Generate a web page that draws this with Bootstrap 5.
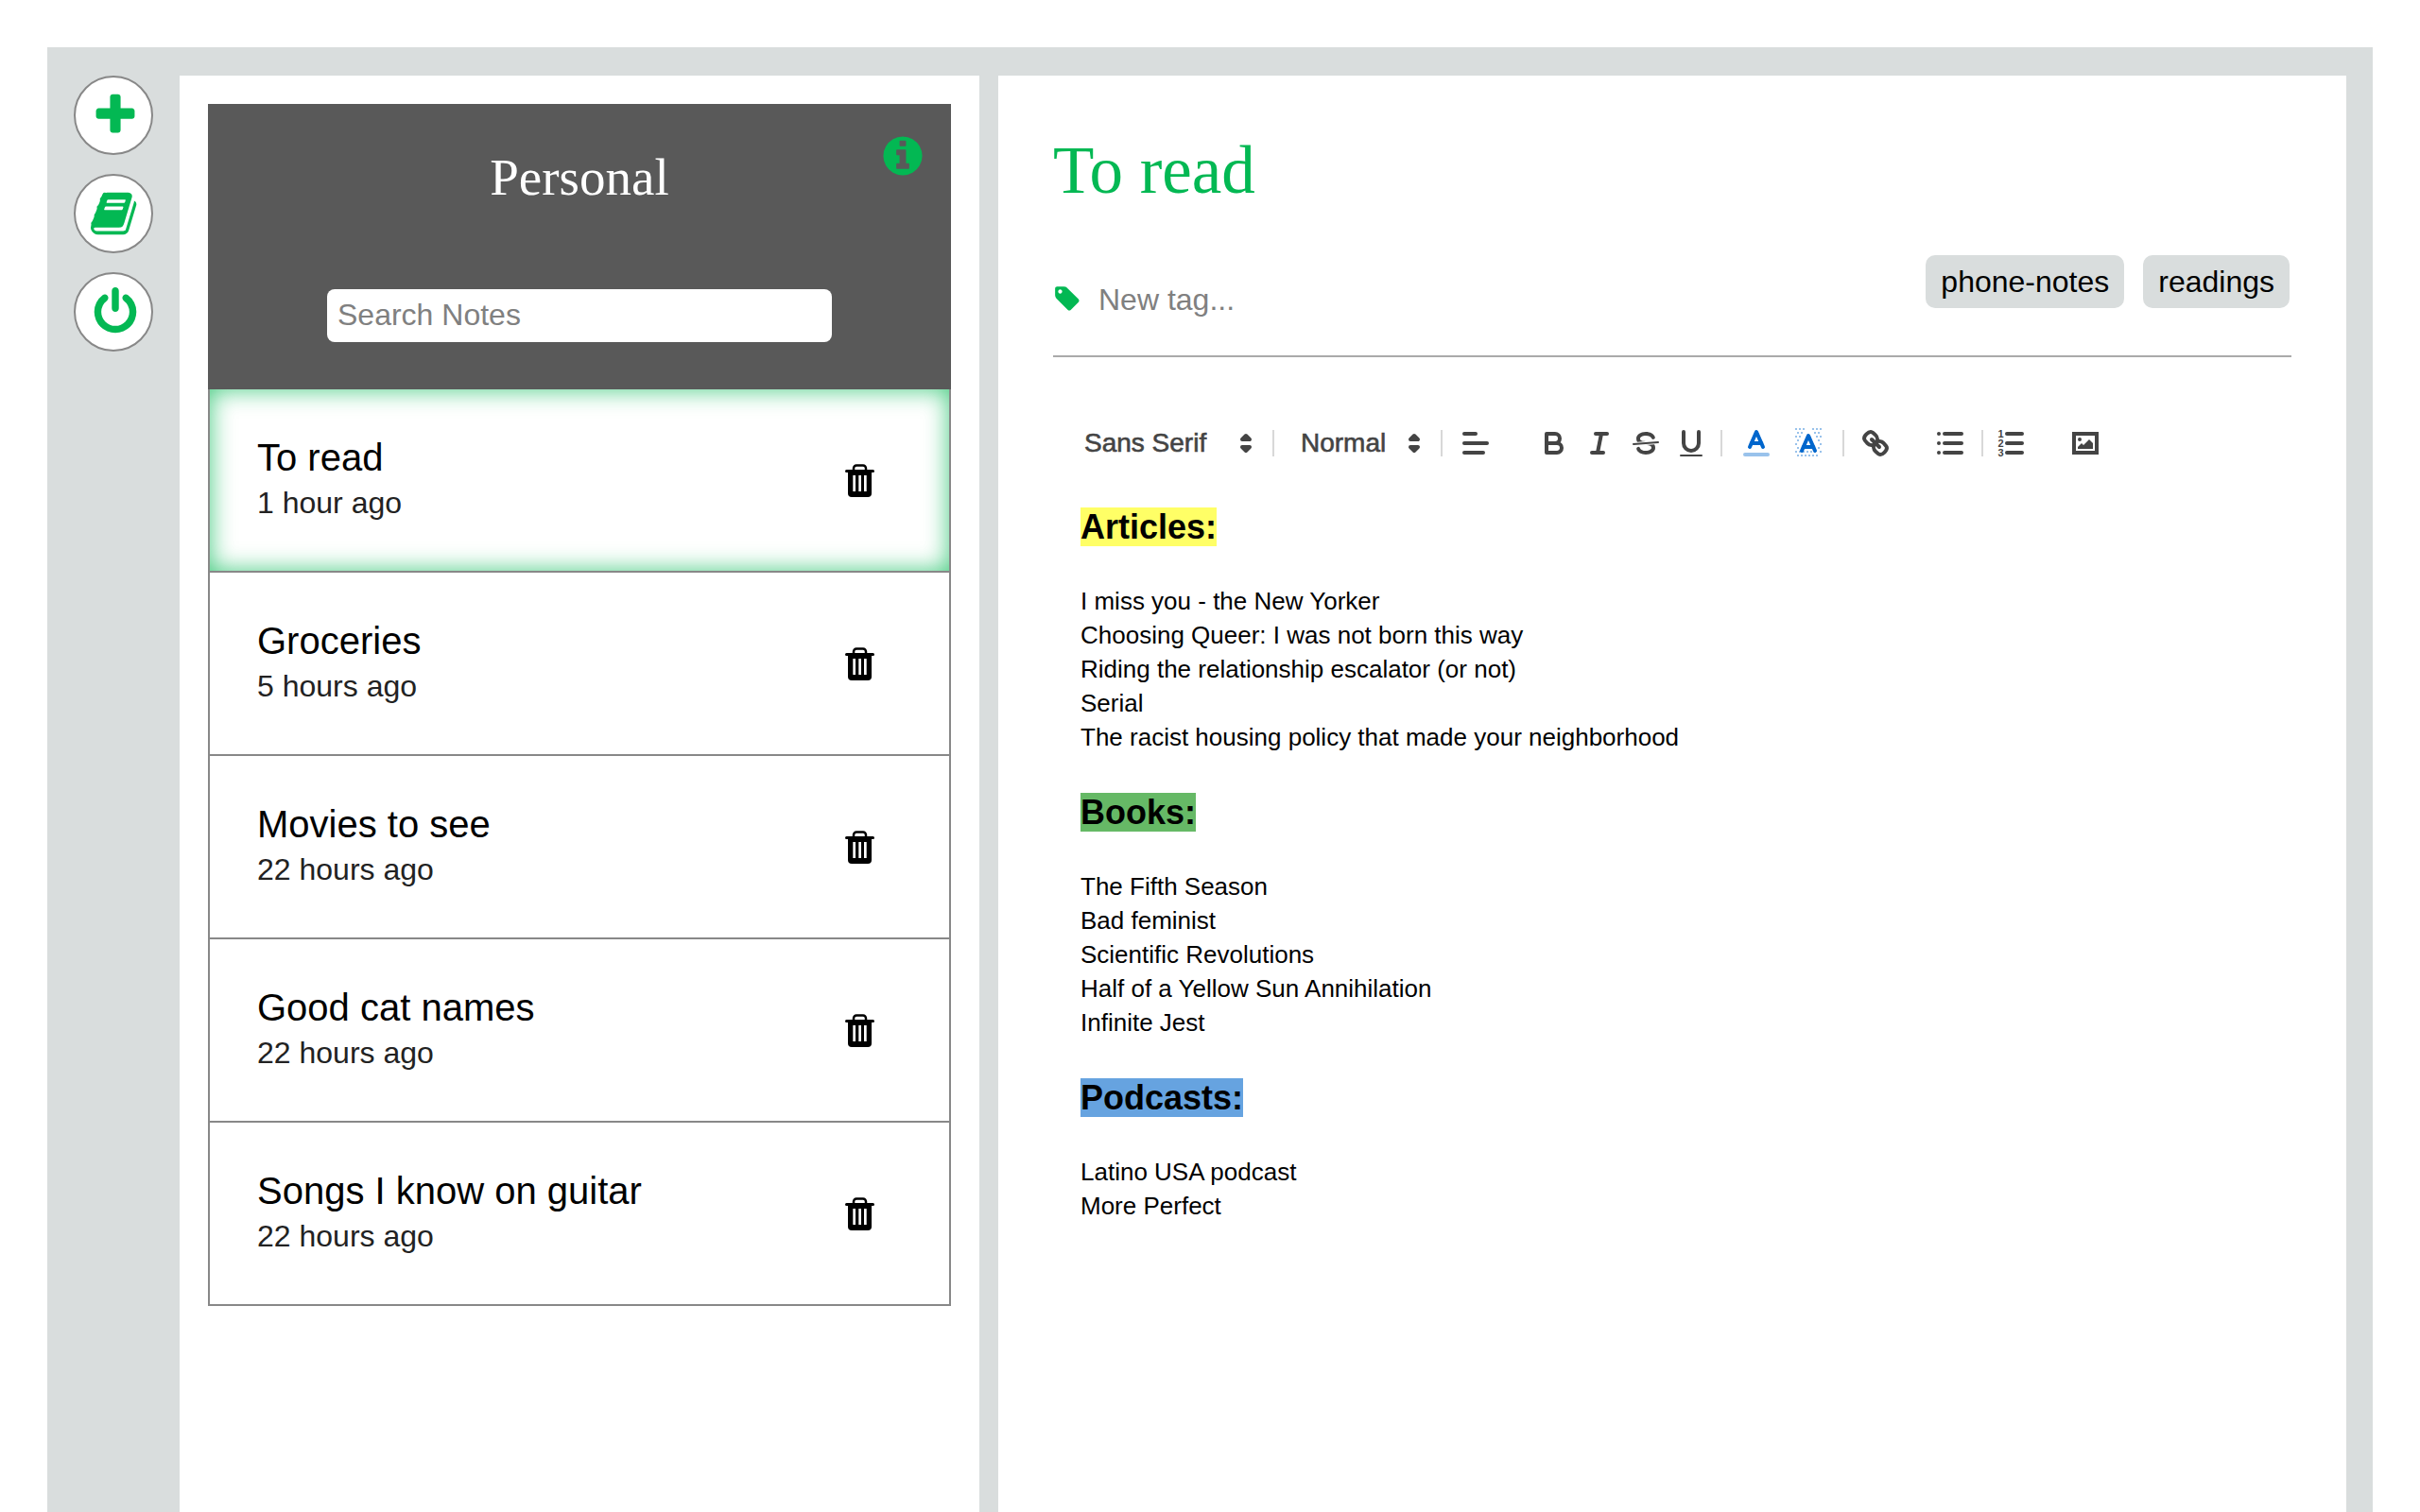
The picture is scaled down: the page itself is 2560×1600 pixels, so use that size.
<!DOCTYPE html>
<html lang="en"><head><meta charset="utf-8"><title>Notes</title>
<link rel="stylesheet" href="https://cdn.jsdelivr.net/npm/bootstrap@5.3.0/dist/css/bootstrap.min.css">
<style>
:root{--grn:#03b853;--bgy:#d9dddd;}
html,body{height:1600px;overflow:hidden;}
body{font-family:"Liberation Sans",Arial,sans-serif;background:#fff;color:#000;padding:50px 50px 0;}
.shell{background:var(--bgy);height:1550px;padding-top:30px;}
.rail{width:140px;flex:none;padding-left:28px;gap:20px;}
.roundbtn{width:84px;height:84px;border:2px solid #888;border-radius:50%;background:#fff;padding:0;}
.roundbtn svg{fill:var(--grn);margin-left:4px;}
.listpanel{width:846px;flex:none;background:#fff;padding:30px;margin-right:20px;}
.editorpanel{width:1426px;flex:none;background:#fff;margin-right:28px;}
.listhead{background:#595959;height:302px;position:relative;}
.nbname{font-family:"Liberation Serif",serif;font-size:55px;line-height:60px;color:#fff;font-weight:400;text-align:center;margin:0;padding-top:48px;}
.infoicon{position:absolute;left:711px;top:31px;fill:var(--grn);}
.searchbox{display:block;width:534px;height:56px;margin:88px auto 0;border:0;border-radius:8px;padding:0 11px 2px;font-size:32px;background:#fff;}
.searchbox::placeholder,.tagbox::placeholder{color:#808080;opacity:1;}
.noterow{height:194px;border:2px solid #888;border-top:0;padding:0 30px 0 50px;background:#fff;}
.noterow.current{box-shadow:inset 0 0 26px rgba(3,184,83,.75);border-top:0;}
.notetitle{font-size:40px;line-height:46px;margin:-4px 0 0;}
.notetime{font-size:32px;line-height:38px;color:#222;margin-top:6px;}
.binicon{width:31px;height:35px;margin-right:49px;}
.edhead{margin:0 58px;height:298px;border-bottom:2px solid #aaa;}
.edtitle{font-family:"Liberation Serif",serif;font-size:71px;line-height:80px;color:var(--grn);font-weight:400;margin:0;padding-top:60px;}
.tagzone{margin-top:50px;}
.tagbox{border:0;font-size:32px;color:#333;width:300px;margin-left:18px;padding:0;outline:0;margin-top:27px;line-height:40px;height:40px;}
.tagicon{width:30px;height:30px;fill:var(--grn);margin-top:31px;}
.chipset{gap:20px;margin-right:2px;}
.chip{background:var(--bgy);border-radius:10px;font-size:32px;line-height:56px;height:56px;padding:0 16px;}
.tbar{height:72px;margin:55px 0 0 91px;color:#444;}
.pickname{font-size:28px;color:#444;-webkit-text-stroke:.6px #444;line-height:36px;}
.pick svg,.tbtn svg{width:36px;height:36px;display:block;}
.pick .arrowset{stroke:#444;stroke-width:2;stroke-linejoin:round;fill:#444;}
.arrow-a{margin-right:10px;}
.arrow-b{margin-right:10px;}
.tbtn{width:48.5px;height:36px;flex:none;display:flex;justify-content:center;}
.tsep{width:2px;height:28px;background:#d8d8d8;flex:none;}
svg .s{fill:none;stroke:#444;stroke-width:2;stroke-linecap:round;stroke-linejoin:round;}
svg .t{fill:none;stroke:#444;stroke-width:1;stroke-linecap:round;}
svg .f{fill:#444;}
.notebody{padding:0 0 0 87px;font-size:26px;line-height:36px;margin-top:27px;}
.notebody h2{font-size:36px;line-height:52px;font-weight:700;margin:36px 0 34px;}
.notebody h2:first-child{margin-top:0;}
.hl-y{background:#ffff66;}.hl-g{background:#66b966;}.hl-b{background:#66a3e0;}
</style></head>
<body>
<div class="shell d-flex">
 <div class="rail d-flex flex-column">
  <button class="roundbtn d-flex align-items-center justify-content-center" aria-label="New note"><svg width="52" height="52" viewBox="0 0 1792 1792"><path d="M1600 736v192q0 40-28 68t-68 28h-416v416q0 40-28 68t-68 28h-192q-40 0-68-28t-28-68v-416h-416q-40 0-68-28t-28-68v-192q0-40 28-68t68-28h416v-416q0-40 28-68t68-28h192q40 0 68 28t28 68v416h416q40 0 68 28t28 68z"/></svg></button>
  <button class="roundbtn d-flex align-items-center justify-content-center" aria-label="Notebooks"><svg width="52" height="52" viewBox="0 0 1792 1792"><path d="M1639 478q40 57 18 129l-275 906q-19 64-76.500 107.500t-122.500 43.500h-923q-77 0-148.500-53.500t-99.500-131.500q-24-67-2-127 0-4 3-27t4-37q1-8-3-21.500t-3-19.500q2-11 8-21t16.500-23.500 16.500-23.500q23-38 45-91.500t30-91.500q3-10 .5-30t-.5-28q3-11 17-28t17-23q21-36 42-92t25-90q1-9-2.500-32t.5-28q4-13 22-30.500t22-22.500q19-26 42.500-84.500t27.500-96.500q1-8-3-25.500t-2-26.500q2-8 9-18t18-23 17-21q8-12 16.500-30.500t15-35 16-36 19.500-32 26.500-23.500 36-11.500 47.500 5.500l-1 3q38-9 51-9h761q74 0 114 56t18 130l-274 906q-36 119-71.500 153.500t-128.500 34.500h-869q-27 0-38 15-11 16-1 43 24 70 144 70h923q29 0 56-15.500t35-41.500l300-987q7-22 5-57 38 15 59 43zm-1064 2q-4 13 2 22.500t20 9.500h608q13 0 25.500-9.500t16.500-22.500l21-64q4-13-2-22.500t-20-9.500h-608q-13 0-25.500 9.500t-16.500 22.500zm-83 256q-4 13 2 22.500t20 9.500h608q13 0 25.500-9.500t16.500-22.500l21-64q4-13-2-22.500t-20-9.500h-608q-13 0-25.500 9.500t-16.500 22.500z"/></svg></button>
  <button class="roundbtn d-flex align-items-center justify-content-center" aria-label="Log out"><svg width="52" height="52" viewBox="0 0 1792 1792"><path d="M1664 896q0 156-61 298t-164 245-245 164-298 61-298-61-245-164-164-245-61-298q0-182 80.500-343t226.500-270q43-32 95.500-25t83.500 50q32 42 24.500 94.500t-49.500 84.500q-98 74-151.500 181t-53.500 228q0 104 40.500 198.500t109.500 163.500 163.500 109.500 198.500 40.500 198.500-40.500 163.500-109.500 109.500-163.500 40.500-198.500q0-121-53.500-228t-151.500-181q-42-32-49.500-84.500t24.500-94.500q31-43 84-50t95 25q146 109 226.500 270t80.500 343zm-640-768v640q0 52-38 90t-90 38-90-38-38-90v-640q0-52 38-90t90-38 90 38 38 90z"/></svg></button>
 </div>
 <div class="listpanel">
  <div class="listhead">
   <h1 class="nbname">Personal</h1>
   <svg class="infoicon" width="48" height="48" viewBox="0 0 1792 1792"><path d="M1152 1376v-160q0-14-9-23t-23-9h-96v-512q0-14-9-23t-23-9h-320q-14 0-23 9t-9 23v160q0 14 9 23t23 9h96v320h-96q-14 0-23 9t-9 23v160q0 14 9 23t23 9h448q14 0 23-9t9-23zm-128-896v-160q0-14-9-23t-23-9h-192q-14 0-23 9t-9 23v160q0 14 9 23t23 9h192q14 0 23-9t9-23zm640 416q0 209-103 385.500t-279.500 279.500-385.500 103-385.500-103-279.500-279.500-103-385.500 103-385.500 279.500-279.500 385.500-103 385.500 103 279.500 279.500 103 385.500z"/></svg>
   <input class="searchbox" placeholder="Search Notes" aria-label="Search Notes">
  </div>
  <div class="noterow current d-flex align-items-center justify-content-between"><div><p class="notetitle">To read</p><div class="notetime">1 hour ago</div></div><svg class="binicon" viewBox="0 0 31 35"><use href="#bin"/></svg></div>
  <div class="noterow d-flex align-items-center justify-content-between"><div><p class="notetitle">Groceries</p><div class="notetime">5 hours ago</div></div><svg class="binicon" viewBox="0 0 31 35"><use href="#bin"/></svg></div>
  <div class="noterow d-flex align-items-center justify-content-between"><div><p class="notetitle">Movies to see</p><div class="notetime">22 hours ago</div></div><svg class="binicon" viewBox="0 0 31 35"><use href="#bin"/></svg></div>
  <div class="noterow d-flex align-items-center justify-content-between"><div><p class="notetitle">Good cat names</p><div class="notetime">22 hours ago</div></div><svg class="binicon" viewBox="0 0 31 35"><use href="#bin"/></svg></div>
  <div class="noterow d-flex align-items-center justify-content-between"><div><p class="notetitle">Songs I know on guitar</p><div class="notetime">22 hours ago</div></div><svg class="binicon" viewBox="0 0 31 35"><use href="#bin"/></svg></div>
 </div>
 <div class="editorpanel">
  <div class="edhead">
   <h2 class="edtitle">To read</h2>
   <div class="tagzone d-flex justify-content-between align-items-start">
    <div class="d-flex align-items-start"><svg class="tagicon" viewBox="0 0 1792 1792"><path d="M576 448q0-53-37.500-90.500t-90.500-37.500-90.500 37.500-37.500 90.500 37.500 90.500 90.500 37.500 90.500-37.500 37.500-90.500zm1067 576q0 53-37 90l-491 492q-39 37-91 37-53 0-90-37l-715-716q-38-37-64.500-101t-26.500-117v-416q0-52 38-90t90-38h416q53 0 117 26.500t102 64.500l715 714q37 39 37 91z"/></svg><input class="tagbox" placeholder="New tag..." aria-label="New tag"></div>
    <div class="d-flex chipset"><span class="chip">phone-notes</span><span class="chip">readings</span></div>
   </div>
  </div>
  <div class="tbar d-flex align-items-center">
   <div class="pick d-flex align-items-center" style="width:199px"><span class="pickname">Sans Serif</span><svg class="ms-auto arrow-a" viewBox="0 0 18 18"><g class="arrowset"><polygon points="7 11 9 13 11 11 7 11"/><polygon points="7 7 9 5 11 7 7 7"/></g></svg></div>
   <div class="tsep"></div>
   <div class="pick d-flex align-items-center" style="width:176px;padding-left:28px"><span class="pickname">Normal</span><svg class="ms-auto arrow-b" viewBox="0 0 18 18"><g class="arrowset"><polygon points="7 11 9 13 11 11 7 11"/><polygon points="7 7 9 5 11 7 7 7"/></g></svg></div>
   <div class="tsep"></div>
   <div class="tbtn" style="margin-left:11px;margin-right:34px"><svg viewBox="0 0 18 18"><line class="s" x1="3" x2="15" y1="9" y2="9"/><line class="s" x1="3" x2="13" y1="14" y2="14"/><line class="s" x1="3" x2="9" y1="4" y2="4"/></svg></div>
   <div class="tbtn"><svg viewBox="0 0 18 18"><path class="s" d="M5,4H9.5A2.5,2.5,0,0,1,12,6.5v0A2.5,2.5,0,0,1,9.5,9H5A0,0,0,0,1,5,9V4A0,0,0,0,1,5,4Z"/><path class="s" d="M5,9h5.5A2.5,2.5,0,0,1,13,11.5v0A2.5,2.5,0,0,1,10.500,14H5a0,0,0,0,1,0,0V9A0,0,0,0,1,5,9Z"/></svg></div>
   <div class="tbtn"><svg viewBox="0 0 18 18"><line class="s" x1="7" x2="13" y1="4" y2="4"/><line class="s" x1="5" x2="11" y1="14" y2="14"/><line class="s" x1="8" x2="10" y1="14" y2="4"/></svg></div>
   <div class="tbtn"><svg viewBox="0 0 18 18"><line class="t" x1="15.5" x2="2.5" y1="8.5" y2="9.5"/><path class="f" d="M9.007,8C6.542,7.791,6,7.519,6,6.5,6,5.792,7.283,5,9,5c1.571,0,2.765.679,2.969,1.309a1,1,0,0,0,1.9-.617C13.356,4.106,11.354,3,9,3,6.2,3,4,4.538,4,6.5a3.2,3.2,0,0,0,.5,1.843Z"/><path class="f" d="M8.984,10C11.457,10.208,12,10.479,12,11.5c0,.708-1.283,1.5-3,1.5-1.571,0-2.765-.679-2.969-1.309a1,1,0,1,0-1.9.617C4.644,13.894,6.646,15,9,15c2.8,0,5-1.538,5-3.5a3.2,3.2,0,0,0-.5-1.843Z"/></svg></div>
   <div class="tbtn" style="margin-right:6px"><svg viewBox="0 0 18 18"><path class="s" d="M5,3V9a4.012,4.012,0,0,0,4,4H9a4.012,4.012,0,0,0,4-4V3"/><rect class="f" height="1" rx="0.5" ry="0.5" width="12" x="3" y="15"/></svg></div>
   <div class="tsep"></div>
   <div class="tbtn" style="margin-left:12px;margin-right:7px"><svg viewBox="0 0 18 18"><line x1="3" x2="15" y1="15" y2="15" stroke="#99c2eb" stroke-width="2" stroke-linecap="round"/><polyline fill="none" stroke="#0066cc" stroke-width="2" stroke-linecap="round" stroke-linejoin="round" points="5.5 11 9 3 12.5 11"/><line stroke="#0066cc" stroke-width="2" stroke-linecap="round" x1="11.63" x2="6.38" y1="9" y2="9"/></svg></div>
   <div class="tbtn" style="margin-right:11px"><svg viewBox="0 0 18 18"><g fill="#99c2eb"><rect x="2" y="1" width="1" height="1"/><rect x="4" y="1" width="1" height="1"/><rect x="6" y="1" width="1" height="1"/><rect x="11" y="1" width="1" height="1"/><rect x="13" y="1" width="1" height="1"/><rect x="15" y="1" width="1" height="1"/><rect x="3" y="3" width="1" height="1"/><rect x="5" y="3" width="1" height="1"/><rect x="12" y="3" width="1" height="1"/><rect x="14" y="3" width="1" height="1"/><rect x="2" y="5" width="1" height="1"/><rect x="4" y="5" width="1" height="1"/><rect x="13" y="5" width="1" height="1"/><rect x="15" y="5" width="1" height="1"/><rect x="3" y="7" width="1" height="1"/><rect x="14" y="7" width="1" height="1"/><rect x="2" y="9" width="1" height="1"/><rect x="15" y="9" width="1" height="1"/><rect x="3" y="11" width="1" height="1"/><rect x="14" y="11" width="1" height="1"/><rect x="2" y="13" width="1" height="1"/><rect x="4" y="13" width="1" height="1"/><rect x="6" y="13" width="1" height="1"/><rect x="8" y="13" width="1" height="1"/><rect x="10" y="13" width="1" height="1"/><rect x="12" y="13" width="1" height="1"/><rect x="15" y="13" width="1" height="1"/><rect x="3" y="15" width="1" height="1"/><rect x="5" y="15" width="1" height="1"/><rect x="7" y="15" width="1" height="1"/><rect x="9" y="15" width="1" height="1"/><rect x="11" y="15" width="1" height="1"/><rect x="13" y="15" width="1" height="1"/></g><polyline fill="none" stroke="#0066cc" stroke-width="2" stroke-linecap="round" stroke-linejoin="round" points="5.5 13 9 5 12.5 13"/><line stroke="#0066cc" stroke-width="2" stroke-linecap="round" x1="11.63" x2="6.38" y1="11" y2="11"/></svg></div>
   <div class="tsep"></div>
   <div class="tbtn" style="margin-left:9px;margin-right:31px"><svg viewBox="0 0 18 18"><line class="s" x1="7" x2="11" y1="7" y2="11"/><path class="s" d="M8.9,4.577a3.476,3.476,0,0,1,.36,4.679A3.476,3.476,0,0,1,4.577,8.9C3.185,7.5,2.035,6.4,4.217,4.217S7.5,3.185,8.9,4.577Z"/><path class="s" d="M13.423,9.1a3.476,3.476,0,0,0-4.679-.36,3.476,3.476,0,0,0,.36,4.679c1.392,1.392,2.5,2.542,4.679.36S14.815,10.5,13.423,9.1Z"/></svg></div>
   <div class="tbtn" style="margin-right:8px"><svg viewBox="0 0 18 18"><line class="s" x1="6" x2="15" y1="4" y2="4"/><line class="s" x1="6" x2="15" y1="9" y2="9"/><line class="s" x1="6" x2="15" y1="14" y2="14"/><line class="s" x1="3" x2="3" y1="4" y2="4"/><line class="s" x1="3" x2="3" y1="9" y2="9"/><line class="s" x1="3" x2="3" y1="14" y2="14"/></svg></div>
   <div class="tsep"></div>
   <div class="tbtn" style="margin-left:5px;margin-right:31px"><svg viewBox="0 0 18 18"><line class="s" x1="7" x2="15" y1="4" y2="4"/><line class="s" x1="7" x2="15" y1="9" y2="9"/><line class="s" x1="7" x2="15" y1="14" y2="14"/><g font-family="Liberation Sans,sans-serif" font-size="5.500" font-weight="700" fill="#444"><text x="2.200" y="6">1</text><text x="2.200" y="11">2</text><text x="2.200" y="16">3</text></g></svg></div>
   <div class="tbtn"><svg viewBox="0 0 18 18"><rect class="s" style="stroke-linejoin:miter" height="10" width="12" x="3" y="4"/><circle class="f" cx="6" cy="7" r="1"/><polyline class="f" points="5 12 5 11 7 9 8 10 11 7 13 9 13 12 5 12"/></svg></div>
  </div>
  <div class="notebody">
   <h2><span class="hl-y">Articles:</span></h2>
   <div>I miss you - the New Yorker</div><div>Choosing Queer: I was not born this way</div><div>Riding the relationship escalator (or not)</div><div>Serial</div><div>The racist housing policy that made your neighborhood</div>
   <h2><span class="hl-g">Books:</span></h2>
   <div>The Fifth Season</div><div>Bad feminist</div><div>Scientific Revolutions</div><div>Half of a Yellow Sun Annihilation</div><div>Infinite Jest</div>
   <h2><span class="hl-b">Podcasts:</span></h2>
   <div>Latino USA podcast</div><div>More Perfect</div>
  </div>
 </div>
</div>
<svg width="0" height="0" class="position-absolute"><defs><g id="bin"><path d="M9 7V4.500A3 3 0 0 1 12 1.500h7a3 3 0 0 1 3 3V7" fill="none" stroke="#000" stroke-width="2.500"/><rect x="0" y="6" width="31" height="3" rx="1.500"/><path d="M3 8h25v23a4 4 0 0 1-4 4H7a4 4 0 0 1-4-4z"/><g fill="#fff"><rect x="8.300" y="12" width="2.700" height="17"/><rect x="14.300" y="12" width="2.700" height="17"/><rect x="20" y="12" width="2.700" height="17"/></g></g></defs></svg>
<script src="https://cdn.jsdelivr.net/npm/bootstrap@5.3.0/dist/js/bootstrap.bundle.min.js"></script>
</body></html>
